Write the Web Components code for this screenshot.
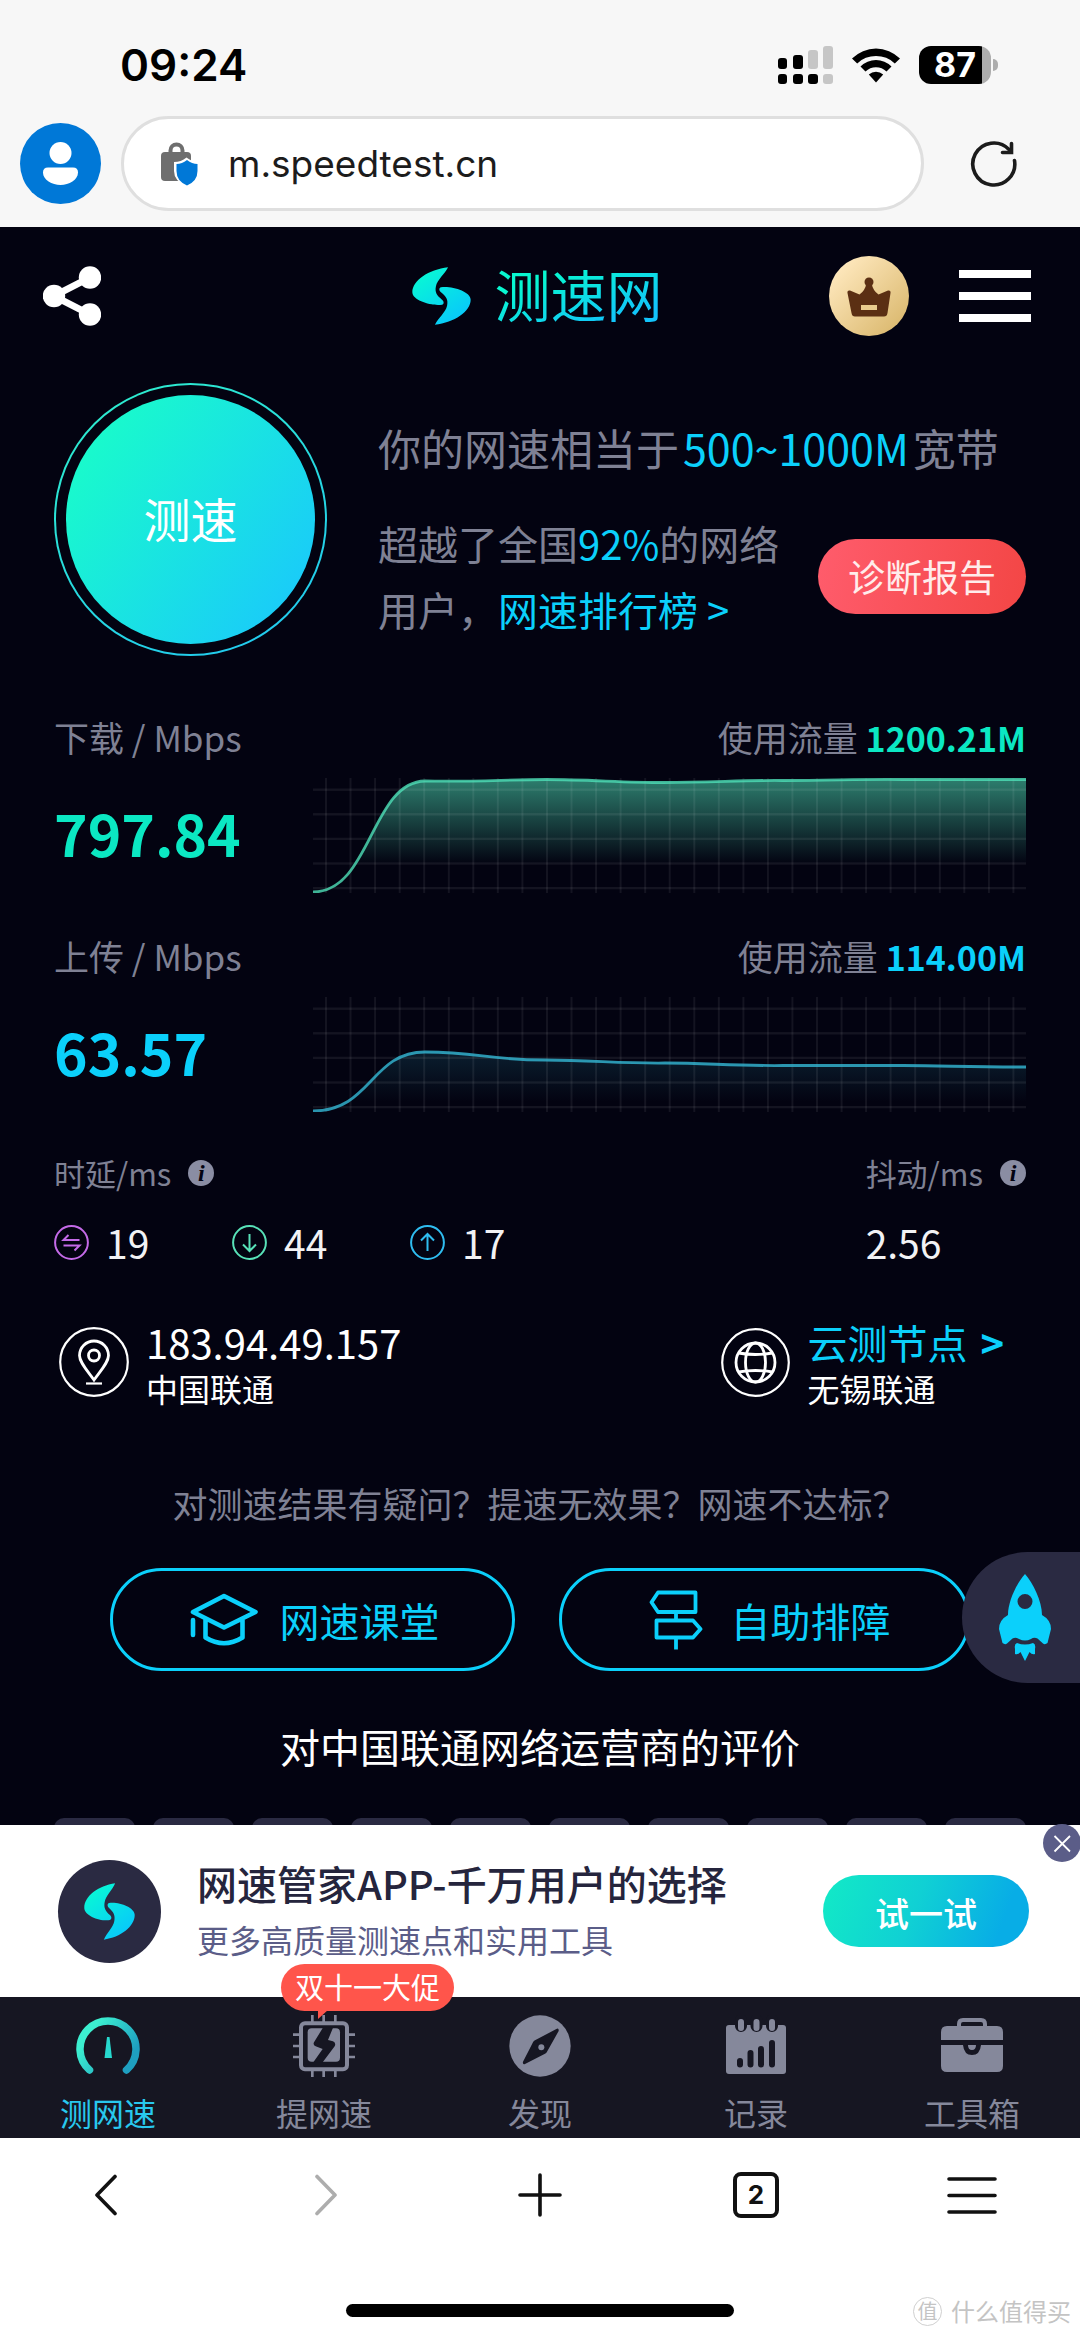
<!DOCTYPE html>
<html lang="zh-CN">
<head>
<meta charset="utf-8">
<meta name="viewport" content="width=device-width, initial-scale=1">
<title>测速网</title>
<style>
  html, body { margin: 0; height: 100%; }
  body {
    font-family: "Noto Sans CJK SC", "Noto Sans", sans-serif;
    background: #fff;
    --ink: #030311; --muted: #7f8194; --cyan: #0bd0fb; --green: #0be8c3;
    --panel: #2a2a42; --side: 54px;
  }
</style>
</head>
<body>
<speed-app></speed-app>
<script>
const BASE = `
  *, *::before { box-sizing: border-box; }
  :host { display: block; }
  svg { display: block; flex: none; }
  button { font: inherit; color: inherit; background: none; border: 0; padding: 0; margin: 0; cursor: pointer; }
  a { color: inherit; text-decoration: none; }
  p, h1, h2 { margin: 0; font-weight: inherit; font-size: inherit; }
`;
function define(name, css, html) {
  const template = document.createElement('template');
  template.innerHTML = `<style>${BASE}${css}</style>${html}`;
  customElements.define(name, class extends HTMLElement {
    constructor() {
      super();
      this.attachShadow({ mode: 'open' }).append(template.content.cloneNode(true));
    }
  });
}

/* The two-leaf brand mark; size it from outside through --mark-w and --mark-h. */
define('brand-mark', `
  svg { width: var(--mark-w, 59px); height: var(--mark-h, 58px); }
`, `
  <svg viewBox="61 54 175 174" preserveAspectRatio="none" aria-hidden="true">
    <defs><linearGradient id="g" x1="0" y1="0" x2="0.7" y2="1">
      <stop offset="0" stop-color="#08ffcf"/><stop offset="1" stop-color="#08c8fb"/></linearGradient></defs>
    <path fill="url(#g)" d="M168 55C110 62 62 95 62 130C62 155 120 172 150 167C156 165 157 158 150 152C135 140 128 130 132 112C136 92 158 76 168 55Z
      M129 227C187 220 235 187 235 152C235 127 177 110 147 115C141 117 140 124 147 130C162 142 169 152 165 170C161 190 139 206 129 227Z"/>
  </svg>`);

define('status-bar', `
  :host { display: flex; justify-content: space-between; align-items: center; padding: 41px 82px 27px 120px;
    background: #f7f7f7; color: #000; font-family: Inter, "Liberation Sans", sans-serif; }
  time { font-size: 44px; line-height: 48px; font-weight: 600; }
  .icons { display: flex; align-items: center; gap: 19px; }
  .battery { display: flex; align-items: center; gap: 2px; }
  .cell { display: flex; width: 72px; height: 38px; border-radius: 12px; justify-content: center; align-items: center;
    background: linear-gradient(90deg, #000 63px, #adadad 63px); color: #fff; font-size: 34px; line-height: 38px; font-weight: 700; }
  .nub { width: 5px; height: 12px; border-radius: 0 5px 5px 0; background: #adadad; }
`, `
  <time>09:24</time>
  <div class="icons">
    <svg width="55" height="38" viewBox="0 0 55 38" aria-label="信号">
      <rect y="12" width="9" height="11" rx="3"/><rect x="15" y="9" width="10" height="14" rx="3"/>
      <rect x="30" y="4" width="10" height="19" rx="3" fill="#c6c6c6"/><rect x="45" width="10" height="23" rx="3" fill="#c6c6c6"/>
      <rect y="28" width="9" height="10" rx="3"/><rect x="15" y="28" width="10" height="10" rx="3"/>
      <rect x="30" y="28" width="10" height="10" rx="3"/><rect x="45" y="28" width="10" height="10" rx="3" fill="#c6c6c6"/>
    </svg>
    <svg width="48" height="36" viewBox="0 0 48 36" aria-label="无线网络">
      <path d="M0 11.500A34 34 0 0 1 48 11.500L42.800 16.500A27 27 0 0 0 5.200 16.500Z"/>
      <path d="M8.500 19.500A22 22 0 0 1 39.500 19.500L34.500 24.500A15 15 0 0 0 13.500 24.500Z"/>
      <path d="M16.800 27.500A11 11 0 0 1 31.200 27.500L24 35.500Z"/>
    </svg>
    <div class="battery"><div class="cell">87</div><div class="nub"></div></div>
  </div>`);

define('address-bar', `
  :host { display: flex; align-items: center; gap: 20px; padding: 0 62px 16px 20px; background: #f7f7f7; color: #1c1c1c;
    font-family: Inter, "Liberation Sans", sans-serif; }
  label { flex: 1; min-width: 0; display: flex; align-items: center; gap: 30px; height: 95px; padding: 0 37px;
    border: 3px solid #dfdfdf; border-radius: 48px; background: #fff; }
  input { flex: 1; min-width: 0; border: 0; outline: 0; padding: 0; background: none; font: inherit; font-size: 37px; line-height: 48px; color: inherit; }
  .reload { margin-left: 26px; }
`, `
  <button aria-label="个人资料"><svg width="81" height="81" viewBox="0 0 81 81">
    <circle cx="40.500" cy="40.500" r="40.500" fill="#0078d7"/><circle cx="40.500" cy="30" r="11" fill="#fff"/>
    <path fill="#fff" d="M28 44.500H53Q58 44.500 58 49.500C58 57 49 62 40.500 62C32 62 23 57 23 49.500Q23 44.500 28 44.500Z"/></svg></button>
  <label>
    <svg width="37" height="44" viewBox="0 0 37 44" aria-hidden="true">
      <path d="M9.500 12V8.500A6 6 0 0 1 21.500 8.500V12" fill="none" stroke="#6e6e6e" stroke-width="4"/>
      <rect y="10" width="30" height="29" rx="4" fill="#6e6e6e"/>
      <path d="M25.500 15.500Q20 20 13 20V29Q13 39 25.500 44Q38 39 38 29V20Q31 20 25.500 15.500Z" fill="#fff"/>
      <path d="M26 18Q21 22 15.500 22V29Q15.500 39 26 43.500Q36.500 39 36.500 29V22Q31 22 26 18Z" fill="#0078d7"/>
    </svg>
    <input type="text" aria-label="网址" value="m.speedtest.cn">
  </label>
  <button class="reload" aria-label="刷新"><svg width="48" height="48" viewBox="0 0 48 48" fill="none" stroke="#1c1c1c" stroke-width="3.600" stroke-linecap="round">
    <path d="M44.500 20.500A21 21 0 1 1 39 9.500"/><path d="M41.500 3.500V12.500H32.500"/></svg></button>`);

define('site-header', `
  :host { display: flex; justify-content: space-between; align-items: center; padding: 29px 49px 47px 43px; }
  .left, .right { flex: 1; display: flex; align-items: center; }
  .right { justify-content: flex-end; gap: 50px; }
  .logo { display: flex; align-items: center; gap: 24px; }
  .name { padding-bottom: 6px; font-size: 56px; line-height: 64px; font-weight: 400; color: transparent;
    background: linear-gradient(160deg, #08f7d0 25%, #12c4fb 80%); -webkit-background-clip: text; background-clip: text; }
`, `
  <div class="left"><button aria-label="分享"><svg width="58" height="60" viewBox="0 0 58 60" fill="#fff">
    <path d="M47 11.500L11 30L47 48.500" fill="none" stroke="#fff" stroke-width="7"/>
    <circle cx="47" cy="11.500" r="11.200"/><circle cx="11" cy="30" r="11.200"/><circle cx="47" cy="48.500" r="11.200"/></svg></button></div>
  <a class="logo" href="#"><brand-mark></brand-mark><h1 class="name">测速网</h1></a>
  <div class="right">
    <button aria-label="会员"><svg width="80" height="80" viewBox="0 0 80 80">
      <defs><linearGradient id="c" x1="0" y1="0" x2="1" y2="1"><stop offset="0.100" stop-color="#ffe9bf"/><stop offset="0.900" stop-color="#dbb96f"/></linearGradient></defs>
      <circle cx="40" cy="40" r="40" fill="url(#c)"/>
      <circle cx="40" cy="26" r="4.500" fill="#5b2f13"/>
      <path fill="#5b2f13" d="M37.500 27H42.500Q44 35 49.500 38.500L59 34.500Q62 34 61.500 37L58.500 57Q58 60.500 55 60.500H26Q23 60.500 22.500 57L18.500 37Q18 34 21 34.500L30.500 38.500Q36 35 37.500 27Z"/>
      <rect x="32" y="49" width="16" height="5" fill="#e9cc8d"/></svg></button>
    <button aria-label="菜单"><svg width="72" height="52" viewBox="0 0 72 52" fill="#fff">
      <rect width="72" height="8"/><rect y="22" width="72" height="8"/><rect y="44" width="72" height="8"/></svg></button>
  </div>`);

define('speed-hero', `
  :host { display: flex; align-items: flex-start; gap: 51px; padding: 0 var(--side); color: var(--muted); }
  .start { flex: none; width: 273px; height: 273px; padding: 10px; border-radius: 50%; background:
    linear-gradient(var(--ink), var(--ink)) padding-box, linear-gradient(150deg, #2ff0cb, #20c6f2) border-box; border: 2px solid transparent; }
  .start span { display: grid; place-items: center; width: 100%; height: 100%; padding-bottom: 4px; border-radius: 50%; color: #fff;
    background: linear-gradient(125deg, #19fbcb 12%, #1acafa 90%); font-size: 47px; line-height: 64px; }
  .text { flex: 1; min-width: 0; padding-top: 31px; display: flex; flex-direction: column; gap: 30px; line-height: 66px; }
  .lead { font-size: 43px; white-space: nowrap; }
  .lead b { margin: 0 4px; }
  b, a { font-weight: 400; color: var(--cyan); }
  .row { display: flex; align-items: center; gap: 16px; }
  .row p { flex: 1; font-size: 40px; }
  .row p span { display: block; }
  .report { flex: none; padding: 0 30px; height: 75px; border-radius: 38px; font-size: 37px; line-height: 75px; color: #ffeceb;
    background: linear-gradient(100deg, #ff5c6c, #f34645); }
`, `
  <button class="start"><span>测速</span></button>
  <div class="text">
    <p class="lead">你的网速相当于<b>500~1000M</b>宽带</p>
    <div class="row">
      <p><span>超越了全国<b>92%</b>的网络</span><span>用户，<a href="#">网速排行榜 &gt;</a></span></p>
      <button class="report">诊断报告</button>
    </div>
  </div>`);

/* Grid of one chart: 29 columns, 5 rows. */
const grid = () => {
  let s = '';
  for (let i = 0; i < 29; i++) s += `<rect x="${(12 + i * 24.55).toFixed(1)}" width="2" height="115"/>`;
  for (let i = 0; i < 5; i++) s += `<rect y="${(10.5 + i * 24.6).toFixed(1)}" width="713" height="2.400"/>`;
  return `<g fill="#fff" fill-opacity="0.070">${s}</g>`;
};
const chart = (curve, stroke, alpha, top) => `
  <svg viewBox="0 0 713 115" height="115" preserveAspectRatio="none" aria-hidden="true">
    <defs><linearGradient id="f" gradientUnits="userSpaceOnUse" x1="0" y1="${top}" x2="0" y2="${top > 10 ? 105 : 86}">
      <stop offset="0" stop-color="${stroke}" stop-opacity="${alpha}"/><stop offset="1" stop-color="${stroke}" stop-opacity="0"/></linearGradient></defs>
    <path d="${curve}V114H0Z" fill="url(#f)"/>${grid()}
    <path d="${curve}" fill="none" stroke="${stroke}" stroke-opacity="0.800" stroke-width="2.800"/>
  </svg>`;
define('chart-download', `svg { width: 100%; }`,
  chart('M0 114C58 114 58 4 112 3C160 4 195 1.500 233 1.500C275 1.500 310 4.500 350 4.500C400 4.500 430 2 470 2.500C520 2.500 545 1 590 1.500H713', '#4fe0b8', 0.55, 2));
define('chart-upload', `svg { width: 100%; }`,
  chart('M0 114C58 114 58 55 112 55C165 55 175 63 232 63C280 63 305 66.500 352 66C395 66 420 69 470 68.500H590C640 69 660 70 713 70', '#35b9d6', 0.15, 55));

define('speed-panel', `
  :host { display: flex; flex-direction: column; gap: 17px; padding: 0 var(--side); color: var(--tone); }
  .head { display: flex; justify-content: space-between; font-size: 35px; line-height: 48px; color: var(--muted); }
  .head b { font-size: 34px; line-height: 40px; font-weight: 700; color: var(--tone); }
  .body { display: flex; align-items: center; }
  .value { width: 259px; flex: none; padding-bottom: 8px; font-size: 57px; line-height: 72px; font-weight: 700; }
  .chart { flex: 1; min-width: 0; }
`, `
  <div class="head"><span><slot name="label"></slot></span><div>使用流量 <b><slot name="usage"></slot></b></div></div>
  <div class="body"><div class="value"><slot name="value"></slot></div><div class="chart"><slot></slot></div></div>`);

define('info-dot', `
  :host { display: inline-flex; }
  button { display: grid; place-items: center; width: 26px; height: 26px; border-radius: 50%; background: #8a8da3; color: var(--ink);
    font: italic 700 24px/24px "Liberation Serif", serif; }
`, `<button aria-label="说明">i</button>`);

define('ping-row', `
  :host { display: flex; justify-content: space-between; padding: 0 var(--side); color: #f2f2f4; }
  .label { display: flex; align-items: center; gap: 17px; margin-bottom: 21px; font-size: 31px; line-height: 48px; color: var(--muted); }
  .values { display: flex; font-size: 39px; line-height: 48px; }
  .item { display: flex; align-items: center; gap: 17px; width: 178px; }
`, `
  <div><div class="label"><span>时延/ms</span><info-dot></info-dot></div>
    <div class="values">
      <div class="item"><svg width="35" height="35" viewBox="0 0 35 35" fill="none" stroke="#c46ae8" stroke-width="2">
        <circle cx="17.500" cy="17.500" r="16.400"/><path d="M25.500 15H9.500L14.500 10M9.500 20.500H25.500L20.500 25.500"/></svg><span>19</span></div>
      <div class="item"><svg width="35" height="35" viewBox="0 0 35 35" fill="none" stroke="#58e2b8" stroke-width="2">
        <circle cx="17.500" cy="17.500" r="16.400"/><path d="M17.500 9V26M11 19.500L17.500 26L24 19.500"/></svg><span>44</span></div>
      <div class="item"><svg width="35" height="35" viewBox="0 0 35 35" fill="none" stroke="#2fbdf0" stroke-width="2">
        <circle cx="17.500" cy="17.500" r="16.400"/><path d="M17.500 26V9M11 15.500L17.500 9L24 15.500"/></svg><span>17</span></div>
    </div></div>
  <div><div class="label"><span>抖动/ms</span><info-dot></info-dot></div><div class="values">2.56</div></div>`);

define('node-info', `
  :host { display: flex; align-items: center; gap: 17px; color: #fff; }
  .text { padding-top: 6px; line-height: 46px; font-size: 32px; }
  .title { font-size: 40px; }
`, `<slot name="icon"></slot><div class="text"><div class="title"><slot name="title"></slot></div><slot></slot></div>`);

define('node-row', `
  :host { display: flex; justify-content: space-between; padding: 0 76px 0 59px; }
  a { color: var(--cyan); }
  b { font-weight: 700; margin-left: 4px; }
`, `
  <node-info>
    <svg slot="icon" width="70" height="70" viewBox="0 0 70 70" fill="none" stroke="#fff" stroke-width="2.200">
      <circle cx="35" cy="35" r="33.800"/><path stroke-width="2.800" d="M35 53C27 42 20.500 35 20.500 28.500A14.500 14.500 0 0 1 49.500 28.500C49.500 35 43 42 35 53Z"/>
      <circle cx="35" cy="28.500" r="5.500" stroke-width="2.800"/><path d="M27 56.500H43"/></svg>
    <span slot="title">183.94.49.157</span>中国联通
  </node-info>
  <node-info>
    <svg slot="icon" width="69" height="69" viewBox="0 0 69 69" fill="none" stroke="#fff" stroke-width="2.200">
      <circle cx="34.500" cy="34.500" r="33.300"/><g stroke-width="2.800"><circle cx="34.500" cy="34.500" r="19.500"/><ellipse cx="34.500" cy="34.500" rx="10" ry="19.500"/>
      <path d="M17.500 25Q34.500 28 51.500 25M17.500 44Q34.500 41 51.500 44"/></g></svg>
    <a slot="title" href="#">云测节点 <b>&gt;</b></a>无锡联通
  </node-info>`);

define('help-row', `
  :host { position: relative; display: flex; gap: 44px; padding: 0 110px; color: var(--cyan); }
  .pill { flex: 1; display: flex; justify-content: center; align-items: center; gap: 22px; height: 103px; padding-left: 4px; border: 3px solid currentColor;
    border-radius: 52px; font-size: 40px; line-height: 48px; }
  .pill:nth-of-type(2) { gap: 28px; padding-left: 10px; }
  .boost { position: absolute; right: 0; top: -16px; width: 118px; height: 131px; padding-left: 37px; border-radius: 66px 0 0 66px; background: var(--panel); }
`, `
  <button class="pill"><svg width="68" height="54" viewBox="0 0 68 54" fill="none" stroke="currentColor" stroke-width="4.600" stroke-linejoin="round" stroke-linecap="round">
    <path d="M34 3L65.500 19L34 34.500L3 19ZM15.500 26V44.500Q34 56 52.500 44.500V26M3 27V42"/></svg><span>网速课堂</span></button>
  <button class="pill"><svg width="54" height="60" viewBox="0 0 54 60" fill="none" stroke="currentColor" stroke-width="3.800" stroke-linejoin="round">
    <path d="M9 2.500H46.500V22H9L2.500 12.250ZM7.500 30.500H44L51.500 39L44 47.500H7.500ZM27 22V30.500M27 47.500V59.500"/></svg><span>自助排障</span></button>
  <button class="boost" aria-label="提速"><svg width="52" height="87" viewBox="0 0 52 87" fill="currentColor">
    <path fill-rule="evenodd" d="M26 0C34 9 43 27 43 41Q52 46 52 55L48.500 69Q46 71 44 69.500L38.500 64.500Q35 63 32 65Q26 68 20 65Q17 63 13.500 64.500L8 69.500Q6 71 3.500 69L0 55Q0 46 9 41C9 27 18 9 26 0ZM26 20A7.500 7.500 0 1 0 26 35A7.500 7.500 0 1 0 26 20Z"/>
    <path d="M18 69Q26 72 34 69Q37 70 36 75V80Q33 81 30.500 78L26 87L21.500 78Q19 81 16 80V75Q15 70 18 69Z"/></svg></button>`);

define('rating-block', `
  h2 { text-align: center; color: #fff; font-size: 40px; line-height: 48px; margin-bottom: 48px; }
  .scale { display: flex; gap: 18px; padding: 0 var(--side); }
  .scale button { flex: 1; height: 72px; border-radius: 10px; background: var(--panel); }
`, `<h2>对中国联通网络运营商的评价</h2><div class="scale">${'<button aria-label="评分"></button>'.repeat(10)}</div>`);

define('app-banner', `
  :host { position: relative; display: flex; align-items: center; padding: 0 51px 0 58px; height: 172px; background: #fff; }
  .badge { display: grid; place-items: center; width: 103px; height: 103px; border-radius: 50%; background: var(--panel); --mark-w: 51px; --mark-h: 57px; }
  .text { flex: 1; margin-left: 36px; }
  .title { font-size: 40px; line-height: 56px; color: #25253d; font-weight: 500; }
  .sub { font-size: 32px; line-height: 56px; color: #5b5d88; }
  .try { width: 206px; height: 72px; border-radius: 36px; background: linear-gradient(110deg, #12eac6, #10d0d4 45%, #08ade6 85%); color: #fff; font-size: 34px; line-height: 72px; font-weight: 500; padding-top: 2px; }
  .close { position: absolute; top: -1px; right: 0; }
`, `
  <div class="badge"><brand-mark></brand-mark></div>
  <div class="text"><p class="title">网速管家APP-千万用户的选择</p><p class="sub">更多高质量测速点和实用工具</p></div>
  <button class="try">试一试</button>
  <button class="close" aria-label="关闭"><svg width="37" height="38" viewBox="0 0 37 38"><circle cx="19" cy="19" r="19" fill="#5b5d88"/>
    <path d="M11.500 12L27 27.500M27 12L11.500 27.500" stroke="#fff" stroke-width="1.800"/></svg></button>`);

define('tab-item', `
  :host { flex: 1; position: relative; color: #85889b; }
  :host([active]) { color: #28c8ee; }
  a { display: flex; flex-direction: column; align-items: center; gap: 15px; padding: 18px 0 6px; font-size: 32px; line-height: 40px; }
  ::slotted(svg) { display: block; }
`, `<a href="#"><slot name="icon"></slot><span><slot></slot></span></a><slot name="promo"></slot>`);

define('promo-bubble', `
  :host { position: absolute; left: 65px; top: -33px; height: 47px; padding: 0 14px; border-radius: 24px; background: #ff554b; color: #fff;
    font-size: 29px; line-height: 45px; white-space: nowrap; }
  :host::after { content: ""; position: absolute; left: 37px; top: 46px; border-top: 9px solid #ff554b; border-right: 10px solid transparent; }
`, `<slot></slot>`);

define('tab-bar', `
  :host { display: block; background: #161622; }
  nav { display: flex; }
`, `<nav>
  <tab-item active><svg slot="icon" width="66" height="62" viewBox="0 0 66 62">
    <defs><linearGradient id="t" x1="0" y1="0.200" x2="1" y2="0.800"><stop offset="0.150" stop-color="#3cefd0"/><stop offset="0.900" stop-color="#1e9fc0"/></linearGradient></defs>
    <path d="M14.500 55A28 28 0 1 1 51.500 55" fill="none" stroke="url(#t)" stroke-width="7.500" stroke-linecap="round"/>
    <path d="M32 22H34.500L37 43H29.500Z" fill="#27d9cf"/></svg>测网速</tab-item>
  <tab-item><svg slot="icon" width="62" height="62" viewBox="165 74 186 186" fill="#85889b">
    <path d="M165 129H185V137H165ZM165 163H185V171H165ZM165 196H185V204H165ZM331 129H351V137H331ZM331 163H351V171H331ZM331 196H351V204H331ZM219 74H227V95H219ZM253 74H261V95H253ZM288 74H296V95H288ZM219 240H227V260H219ZM253 240H261V260H253ZM288 240H296V260H288Z"/>
    <rect x="189" y="99" width="138" height="138" rx="12" fill="none" stroke="#85889b" stroke-width="12"/>
    <rect x="209" y="114" width="97" height="100" rx="12"/>
    <path fill="#161622" d="M256 110L228 156Q224 163 233 168L254 176L226 216H254L290 168Q295 158 285 153L270 149L285 112Z"/></svg>提网速
    <promo-bubble slot="promo">双十一大促</promo-bubble></tab-item>
  <tab-item><svg slot="icon" width="62" height="62" viewBox="814 74 186 186" fill="#85889b">
    <circle cx="907" cy="167" r="92"/><path fill="#161622" d="M956 116Q964 112 963 122L928 184Q926 188 922 190L862 221Q854 224 856 214L886 156Q888 152 892 150Z"/>
    <circle cx="911" cy="171" r="9"/></svg>发现</tab-item>
  <tab-item><svg slot="icon" width="60" height="62" viewBox="0 0 60 62">
    <path fill="#85889b" d="M3 10H57Q60 10 60 13V56Q60 59 57 59H3Q0 59 0 56V13Q0 10 3 10Z"/>
    <path stroke="#161622" stroke-width="12" stroke-linecap="round" d="M15 5V11M30.500 5V11M46 5V11"/>
    <path stroke="#85889b" stroke-width="6" stroke-linecap="round" d="M15 7V13M30.500 7V13M46 7V13"/>
    <path stroke="#161622" stroke-width="6" stroke-linecap="round" d="M14 46V49.500M24.500 38V49.500M35 34V49.500M46 28V49.500"/></svg>记录</tab-item>
  <tab-item><svg slot="icon" width="62" height="62" viewBox="0 0 62 62" fill="#85889b">
    <path d="M18 12V9Q18 5 22 5H40Q44 5 44 9V12" fill="none" stroke="#85889b" stroke-width="4"/>
    <path d="M6 11H56Q62 11 62 17V25H0V17Q0 11 6 11ZM0 30H22Q23 40 31 40Q39 40 40 30H62V51Q62 57 56 57H6Q0 57 0 51ZM27 30H35Q35 35 31 35Q27 35 27 30Z"/></svg>工具箱</tab-item>
</nav>`);

define('browser-bar', `
  :host { position: relative; padding: 33px 0 20px; background: #fff; color: #111; }
  nav { display: flex; margin-bottom: 85px; }
  nav button { flex: 1; display: grid; place-items: center; height: 48px; }
  .count { display: grid; place-items: center; width: 46px; height: 46px; border: 4px solid #111; border-radius: 8px;
    font: 700 26px/38px Inter, sans-serif; }
  .home { width: 36%; height: 13px; margin: 0 auto; border-radius: 7px; background: #000; }
  .mark { position: absolute; right: 9px; bottom: 8px; display: flex; align-items: center; gap: 9px; font-size: 24px; line-height: 36px; color: #c4c4c4; }
  .mark i { display: grid; place-items: center; width: 29px; height: 29px; border: 1px solid #d0d0d0; border-radius: 50%; font-style: normal; font-size: 20px; line-height: 24px; }
`, `
  <nav>
    <button aria-label="后退"><svg width="26" height="42" viewBox="0 0 26 42" fill="none" stroke="#111" stroke-width="3.600" stroke-linecap="round" stroke-linejoin="round"><path d="M20 2.500L2 21L20 39.500"/></svg></button>
    <button aria-label="前进" disabled><svg width="26" height="42" viewBox="0 0 26 42" fill="none" stroke="#adadad" stroke-width="3.600" stroke-linecap="round" stroke-linejoin="round"><path d="M6 2.500L24 21L6 39.500"/></svg></button>
    <button aria-label="新建标签页"><svg width="44" height="44" viewBox="0 0 44 44" stroke="#111" stroke-width="3.600" stroke-linecap="round"><path d="M22 2V42M2 22H42"/></svg></button>
    <button aria-label="标签页"><span class="count">2</span></button>
    <button aria-label="更多"><svg width="50" height="40" viewBox="0 0 50 40" stroke="#111" stroke-width="3.600" stroke-linecap="round"><path d="M2 4H48M2 20.500H48M2 37H48"/></svg></button>
  </nav>
  <div class="home"></div>
  <div class="mark"><i>值</i><span>什么值得买</span></div>`);

define('speed-app', `
  :host { display: flex; flex-direction: column; height: 100vh; }
  :host > * { flex: none; }
  :host > main { flex: 1 1 0; min-height: 0; overflow: hidden; background: var(--ink); }
  speed-panel { margin-top: 57px; --tone: var(--green); }
  speed-panel + speed-panel { margin-top: 39px; --tone: var(--cyan); }
  ping-row { margin-top: 37px; }
  node-row { margin-top: 47px; }
  .ask { margin: 68px 0 41px; text-align: center; font-size: 35px; line-height: 48px; color: var(--muted); }
  rating-block { margin-top: 51px; }
`, `
  <status-bar></status-bar>
  <address-bar></address-bar>
  <main>
    <site-header></site-header>
    <speed-hero></speed-hero>
    <speed-panel><span slot="label">下载 / Mbps</span><span slot="usage">1200.21M</span><span slot="value">797.84</span><chart-download></chart-download></speed-panel>
    <speed-panel><span slot="label">上传 / Mbps</span><span slot="usage">114.00M</span><span slot="value">63.57</span><chart-upload></chart-upload></speed-panel>
    <ping-row></ping-row>
    <node-row></node-row>
    <p class="ask">对测速结果有疑问？提速无效果？网速不达标？</p>
    <help-row></help-row>
    <rating-block></rating-block>
  </main>
  <app-banner></app-banner>
  <tab-bar></tab-bar>
  <browser-bar></browser-bar>`);
</script>
</body>
</html>
